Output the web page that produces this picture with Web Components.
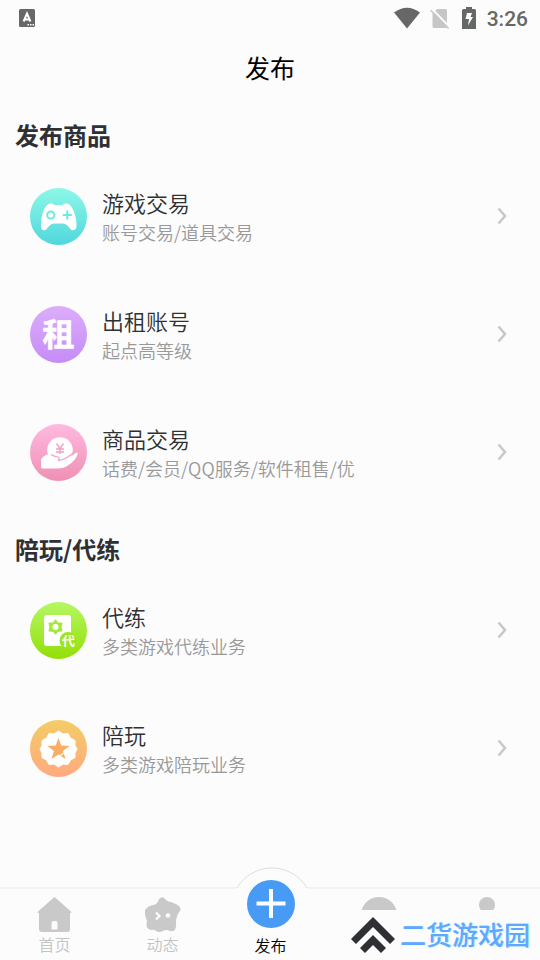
<!DOCTYPE html>
<html lang="zh-CN">
<head>
<meta charset="utf-8">
<meta name="viewport" content="width=device-width, initial-scale=1">
<title>发布</title>
<style>
  html, body { margin: 0; background: #fcfcfc; }
  body { font-family: "Noto Sans CJK SC", sans-serif; color: #2f3033; }
</style>
</head>
<body>
<publish-page></publish-page>

<template id="status-bar">
  <style>
    :host { display: flex; align-items: center; justify-content: space-between; height: 36px; padding: 0 12px 0 19px; color: #666867; box-sizing: border-box; }
    .right { display: flex; align-items: center; }
    svg { display: block; }
    .wifi { margin-right: 10px; }
    .sim { margin-right: 13px; }
    .battery { margin-right: 11px; }
    time { font: 500 21px/24px Roboto, sans-serif; padding-top: 2px; }
  </style>
  <svg width="16" height="18" viewBox="0 0 16 18" aria-hidden="true">
    <rect width="16" height="18" rx="1.5" fill="#666867"/>
    <path d="M4.600 12.500 8 4.500l3.400 8M5.800 10.500h4.400" fill="none" stroke="#fff" stroke-width="2"/>
    <path d="M8.500 15h1.500v1.500H8.500zM11 15h1.500v1.500H11zM13.500 15H15v1.500h-1.500z" fill="#fff"/>
  </svg>
  <div class="right">
    <svg class="wifi" width="26" height="22" viewBox="0 0 26 22" aria-hidden="true"><path d="M0 5.500Q13-4 26 5.500L13 21.500Z" fill="#666867"/></svg>
    <svg class="sim" width="19" height="21" viewBox="0 0 19 21" aria-hidden="true">
      <path d="M7 1h8.500q1.500 0 1.500 1.500V18.500q0 1.500-1.500 1.500H4Q2.500 20 2.500 18.500V6Z" fill="#c6c6c6"/>
      <path d="M2 1 20 19.500" stroke="#fcfcfc" stroke-width="2"/>
      <path d="M.5 2.200 18.500 20.500" stroke="#c6c6c6" stroke-width="1.600"/>
    </svg>
    <svg class="battery" width="14" height="22" viewBox="0 0 14 22" aria-hidden="true">
      <path d="M4 0h6v2h2.500Q14 2 14 3.500V22H0V3.500Q0 2 1.500 2H4Z" fill="#666867"/>
      <path d="M5 6h5L8.500 10H11L6 18.500 7 12H3.500Z" fill="#fff"/>
    </svg>
    <time>3:26</time>
  </div>
</template>

<template id="page-title">
  <style>
    :host { display: flex; align-items: center; justify-content: center; height: 61px; color: #000; }
    h1 { margin: 0; font-size: 25px; line-height: 36px; font-weight: 400; }
  </style>
  <h1><slot></slot></h1>
</template>

<template id="service-section">
  <style>
    :host { display: block; padding-top: 22px; }
    h2 { margin: 0 0 6px; padding: 0 15px; font-size: 24px; line-height: 32px; font-weight: 700; }
  </style>
  <section><h2></h2><slot></slot></section>
</template>

<template id="service-item">
  <style>
    :host { display: block; }
    a { display: flex; align-items: center; min-height: 118px; padding: 0 32px 0 30px; color: inherit; text-decoration: none; }
    .text { flex: 1; min-width: 0; padding: 0 0 0 15px; }
    .name { display: block; font-size: 22px; line-height: 32px; font-weight: 350; }
    .note { display: block; font-size: 18px; line-height: 28px; color: #999; font-weight: 350; }
    svg { display: block; flex: none; }
  </style>
  <a href="#">
    <slot name="icon"></slot>
    <span class="text"><span class="name"></span><span class="note"></span></span>
    <svg width="11" height="18" viewBox="0 0 11 18" aria-hidden="true"><path d="M1.500 1.500 8 9 1.500 16.500" fill="none" stroke="#c8c8c8" stroke-width="2.600"/></svg>
  </a>
</template>

<template id="service-icon">
  <style>
    :host { display: block; flex: none; width: 57px; height: 57px; border-radius: 50%; }
    svg { display: block; width: 100%; height: 100%; }
    text { font-family: "Noto Sans CJK SC", sans-serif; font-weight: 700; }
  </style>
</template>

<template id="tab-bar">
  <style>
    :host { display: block; position: sticky; bottom: 0; background: #fcfcfc; border-top: 2px solid #f2f2f2; }
    nav { display: grid; grid-template-columns: repeat(5, 1fr); min-height: 71px; }
    .bump { position: absolute; left: 50%; top: -23px; margin-left: -35px; display: block; }
  </style>
  <svg class="bump" width="74" height="26" viewBox="0 0 74 26" aria-hidden="true">
    <path d="M2 22A40.600 40.600 0 0 1 72 22V26H2Z" fill="#fcfcfc"/>
    <path d="M2 22A40.600 40.600 0 0 1 72 22" fill="none" stroke="#dedede"/>
  </svg>
  <nav><slot></slot></nav>
</template>

<template id="tab-item">
  <style>
    :host { display: block; position: relative; color: #c4c4c4; }
    :host([current]) { color: #000; }
    button { display: flex; flex-direction: column; align-items: center; justify-content: flex-end; width: 100%; height: 100%; padding: 0 0 4px 1px; border: 0; background: none; color: inherit; font: 350 16px/24px "Noto Sans CJK SC", sans-serif; box-sizing: border-box; }
    svg { display: block; flex: none; }
    .gap { height: 24px; }
    :host([current]) button { padding-bottom: 3px; }
    :host([current]) svg { margin: -16px 0 5px; }
  </style>
  <button type="button"></button>
</template>

<template id="site-badge">
  <style>
    :host { position: absolute; right: 0; bottom: 0; height: 50px; padding: 0 10px 2px; display: flex; align-items: center; gap: 5px; background: #fcfcfc; box-sizing: border-box; }
    svg { display: block; margin-top: 2px; }
    span { font: 500 26px/36px "Noto Sans CJK SC", sans-serif; color: #60a8ff; text-shadow: 1px 0 1px #9de8fa; white-space: nowrap; }
  </style>
  <svg width="44" height="36" viewBox="0 0 44 36" aria-hidden="true">
    <path d="M22 0 44 22 39 27 22 10 5 27 0 22ZM22 18 35 31 30 36 22 28 14 36 9 31Z" fill="#2f3033"/>
  </svg>
  <span><slot></slot></span>
</template>

<template id="publish-page">
  <style>
    :host { display: flex; flex-direction: column; min-height: 100vh; }
    main { flex: 1; }
  </style>
  <status-bar></status-bar>
  <page-title>发布</page-title>
  <main>
    <service-section heading="发布商品">
      <service-item name="游戏交易" note="账号交易/道具交易"><service-icon slot="icon" kind="game"></service-icon></service-item>
      <service-item name="出租账号" note="起点高等级"><service-icon slot="icon" kind="rent"></service-icon></service-item>
      <service-item name="商品交易" note="话费/会员/QQ服务/软件租售/优"><service-icon slot="icon" kind="goods"></service-icon></service-item>
    </service-section>
    <service-section heading="陪玩/代练">
      <service-item name="代练" note="多类游戏代练业务"><service-icon slot="icon" kind="train"></service-icon></service-item>
      <service-item name="陪玩" note="多类游戏陪玩业务"><service-icon slot="icon" kind="play"></service-icon></service-item>
    </service-section>
  </main>
  <tab-bar>
    <tab-item icon="home" label="首页"></tab-item>
    <tab-item icon="star" label="动态"></tab-item>
    <tab-item icon="plus" label="发布" current></tab-item>
    <tab-item icon="message"></tab-item>
    <tab-item icon="person"></tab-item>
    <site-badge>二货游戏园</site-badge>
  </tab-bar>
</template>

<script>
  const SERVICE_ICONS = {
    game: ['#8df8e7', '#50d7dc', c => `
      <path d="M16.500 17.500C19 14.500 23 15 24.500 17h8C34 15 38 14.500 40.500 17.500 44 22 47 31 46.500 38 46.500 43 42 43.500 40 40.500 37 36.500 35 35.500 32 35.500h-7c-3 0-5 1-8 5C15 43.500 11 43 11 38 10.500 31 13 22 16.500 17.500Z" fill="#fff"/>
      <circle cx="20.800" cy="27" r="3.600" fill="none" stroke="${c}" stroke-width="2"/>
      <path d="M37.300 22.500v9M32.800 27h9" stroke="${c}" stroke-width="2"/>`],
    rent: ['#dcadfb', '#c58cf7', () => `<text x="28.500" y="40" font-size="32" text-anchor="middle" fill="#fff" stroke="#fff" stroke-width=".6">租</text>`],
    goods: ['#ffb9df', '#ef90b4', () => `
      <circle cx="30" cy="26" r="12.800" fill="#fff"/>
      <path d="m26.500 19.500 3.500 5 3.500-5M30 24.500V30M26 25h8M26 28h8" fill="none" stroke="#f5a0c5" stroke-width="1.400"/>
      <path d="M11 35.500Q14 30.500 19 30.500q3 0 5 2.500l3.500 1q2.500 1.500 0 3l-3 .500q8 2 15-4l6-4.500q3-1.500 2 1.500-2 6-9 10.500-4 3.500-12 3.500H12.500q-1.500 0-1.500-1.500Z" fill="#fff"/>
      <path d="M21 30.500Q24 32.500 28 33q2.500 2 0 3.500 6-.500 12-5l4-3" fill="none" stroke="#f3a0c1" stroke-width="1.200"/>`],
    train: ['#b5f764', '#93df08', () => `
      <rect x="14" y="13" width="27" height="31" rx="3" fill="#fff"/>
      <path d="M25.500 18.500 27.500 21.500 31.500 21.500 30.500 25 31.500 28.500 27.500 29 25.500 31.500 23.500 29 19.500 28.500 20.500 25 19.500 21.500 23.500 21.500Z" fill="#a3e93c" stroke="#a3e93c" stroke-width="2" stroke-linejoin="round"/>
      <circle cx="25.500" cy="25" r="3" fill="#fff"/>
      <circle cx="38" cy="38.500" r="8.500" fill="#9be522"/>
      <text x="38.500" y="43" font-size="13" text-anchor="middle" fill="#fff">代</text>`],
    play: ['#f4cc65', '#ffaa80', () => `
      <path d="M28.500 11l4.500 3 5-.5 2.500 4.500 4.500 2.500v5l2 3.500-2 4v4.500L40.500 40 38 44.500l-5-.5-4.500 3-4.500-3-5 .5-2.500-4.500L12 37.500V33l-2-4 2-3.500v-5l4.500-2.500L19 13.500l5 .5Z" fill="#fff" stroke="#fff" stroke-linejoin="round"/>
      <path d="m28.500 18 2.800 7.500 8.200.5-6.500 5 2.500 8-7-4.500-7 4.500 2.500-8-6.500-5 8.200-.5Z" fill="#f8ae64"/>
      <path d="m29.500 36 5-3.500" stroke="#fff" stroke-width="1.200"/>`]
  };

  const TAB_ICONS = {
    home: '<svg width="35" height="35" viewBox="0 0 35 35" aria-hidden="true"><path d="M17.500 0 34 14.500q1 1.500-1 1.500v16q0 3-3 3H5q-3 0-3-3V16q-2 0-1-1.500Z" fill="#c9c9c9"/><path d="M14.500 32.500V26q0-2 2-2h2q2 0 2 2v6.500Z" fill="#fcfcfc"/></svg>',
    star: '<svg width="36" height="35" viewBox="0 0 36 35" aria-hidden="true"><path d="M14 2q4-4 7 1 2 2 5 2 12 4 9 9-4 5-4 11 1 11-6 9-4-2-7 0-4 2-7 0-2-2-5-1-6-1-4-9Q-2 14 1 12q2-3 7-4Q12 8 14 2Z" fill="#c9c9c9"/><path d="m11 15.500 3.500 3.500-3.500 3.500" fill="none" stroke="#fcfcfc" stroke-width="2.200"/><circle cx="23" cy="18.500" r="2.300" fill="#fcfcfc"/></svg>',
    plus: '<svg width="48" height="48" viewBox="0 0 48 48" aria-hidden="true"><circle cx="24" cy="24" r="24" fill="#479bf5"/><path d="M24 9v29M9.500 23.500h29" stroke="#fff" stroke-width="4"/></svg>',
    message: '<svg width="36" height="35" viewBox="0 0 36 35" aria-hidden="true"><circle cx="18" cy="18" r="18" fill="#c9c9c9"/></svg>',
    person: '<svg width="30" height="35" viewBox="0 0 30 35" aria-hidden="true"><circle cx="15" cy="8" r="8" fill="#c9c9c9"/><path d="M1 33q0-14 14-14t14 14Z" fill="#c9c9c9"/></svg>'
  };

  class TemplateElement extends HTMLElement {
    constructor() {
      super();
      const template = document.getElementById(this.localName);
      this.attachShadow({ mode: 'open' }).append(document.importNode(template.content, true));
    }
    fill(selector, value) {
      this.shadowRoot.querySelector(selector).textContent = value || '';
    }
  }

  class ServiceSection extends TemplateElement {
    connectedCallback() { this.fill('h2', this.getAttribute('heading')); }
  }

  class ServiceItem extends TemplateElement {
    connectedCallback() {
      this.fill('.name', this.getAttribute('name'));
      this.fill('.note', this.getAttribute('note'));
    }
  }

  class ServiceIcon extends TemplateElement {
    connectedCallback() {
      const [from, to, draw] = SERVICE_ICONS[this.getAttribute('kind')];
      this.style.background = `linear-gradient(${from}, ${to})`;
      const holder = document.createElement('div');
      holder.innerHTML = `<svg viewBox="0 0 57 57" aria-hidden="true">${draw('#6fe8e0')}</svg>`;
      this.shadowRoot.append(holder.firstChild);
    }
  }

  class TabItem extends TemplateElement {
    connectedCallback() {
      const button = this.shadowRoot.querySelector('button');
      const label = this.getAttribute('label');
      button.innerHTML = TAB_ICONS[this.getAttribute('icon')] + (label ? `<span>${label}</span>` : '<span class="gap"></span>');
      if (this.hasAttribute('current')) button.setAttribute('aria-current', 'page');
    }
  }

  customElements.define('status-bar', class extends TemplateElement {});
  customElements.define('page-title', class extends TemplateElement {});
  customElements.define('service-section', ServiceSection);
  customElements.define('service-item', ServiceItem);
  customElements.define('service-icon', ServiceIcon);
  customElements.define('tab-bar', class extends TemplateElement {});
  customElements.define('tab-item', TabItem);
  customElements.define('site-badge', class extends TemplateElement {});
  customElements.define('publish-page', class extends TemplateElement {});
</script>
</body>
</html>
